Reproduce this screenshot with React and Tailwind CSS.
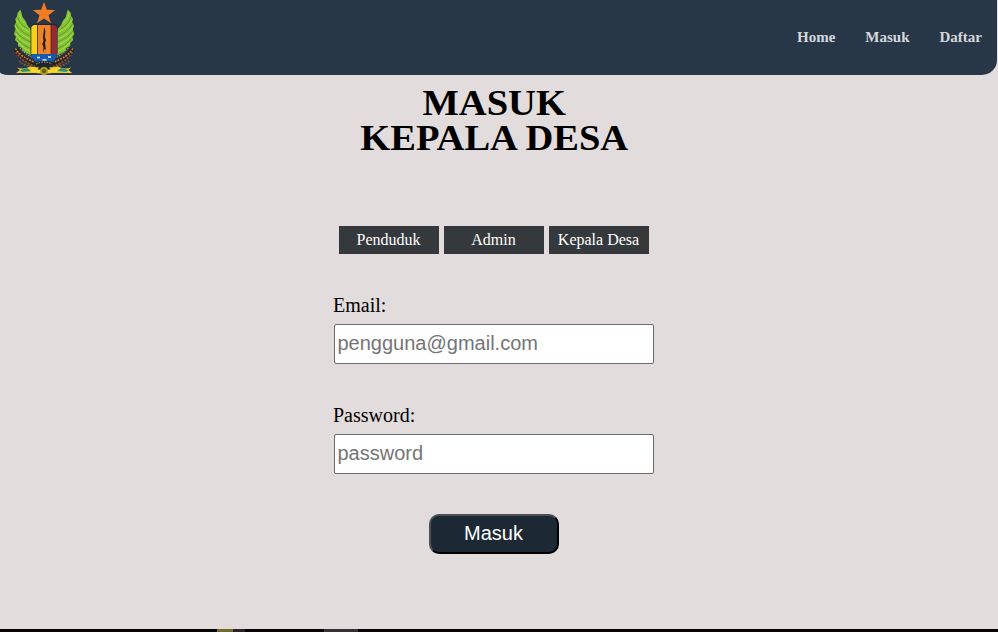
function Wing() {
  return (
    <g>
      <path d="M20.5 9.5L17.5 13L17.2 16L15.2 19L16.2 22L14.2 26L15.6 29L14 34L16 37L15 40L18 43L18 46L22 48L23 51L32 56V33L30.5 29L27.5 25.5L25.5 21L22.5 17L21.5 13Z" fill="#85c336" />
      <path d="M17.5 17Q19 24 28 29M16 24Q19 31 30 36M15.5 31Q20 38 31 42M17 39Q22 45 31 49" fill="none" stroke="#4d8a2b" strokeWidth="0.7" />
      <path d="M19.5 13Q19 19 25 23M17 20Q19 27 29 32M15.5 27Q19 34 30 39M16 34Q21 42 31 45M19 43Q24 49 31 52" fill="none" stroke="#b0dc48" strokeWidth="0.9" />
      <path d="M15.5 49Q20 58 38 65" fill="none" stroke="#2b211c" strokeWidth="5" />
      <path d="M15.5 48.5Q20 57 37 63" fill="none" stroke="#bf8649" strokeWidth="1.6" strokeDasharray="2 1" />
      <path d="M16 52Q21 61 36 67" fill="none" stroke="#9d4b2d" strokeWidth="1.8" strokeDasharray="2 1.3" />
      <path d="M20 48Q26 55 34 58" fill="none" stroke="#b99a5b" strokeWidth="1.2" strokeDasharray="1.5 1.2" />
      <path d="M19 61Q24 66 31 66" fill="none" stroke="#865633" strokeWidth="1.5" strokeDasharray="2 1" />
    </g>
  );
}

function Emblem() {
  return (
    <svg viewBox="0 0 88 75" className="h-[75px] w-[88px] shrink-0" aria-hidden="true">
      <Wing />
      <g transform="translate(88.3 0) scale(-1 1)"><Wing /></g>
      <path d="M44 2L46.8 9.8L55.2 10.1L48.5 15.2L51 23.2L44 18.5L37 23.2L39.5 15.2L32.8 10.1L41.2 9.8Z" fill="#f07d24" />
      <path d="M33 24H55L57.6 26.5V52Q57.6 59 52 62L44 66L36 62Q30.6 59 30.6 52V26.5Z" fill="#1d2330" />
      <path d="M33.5 25H37.5V54H31.3V27Z" fill="#f9cf17" />
      <path d="M37.5 25H51V54H37.5Z" fill="#ee8329" />
      <path d="M51 25H54.7L57 27V54H51Z" fill="#982832" />
      <path d="M37.5 25V54M51 25V54" stroke="#322326" strokeWidth="0.7" />
      <path d="M44.3 27L45.4 31L44.8 37L46 40L45 43L46 50L44.4 49L43.2 53L43.4 47L42.2 44L43.5 41L42.9 37L43.5 33Z" fill="#24201e" />
      <path d="M31.2 54H57.1Q56 60 52 62H36.5Q32 60 31.2 54Z" fill="#155aac" />
      <path d="M37 57.5h3M42.5 60h4M48 57h3" stroke="#e7f4fb" strokeWidth="1.5" />
      <path d="M33 62.5Q44 59 55 62.5L51 69H37Z" fill="#20282d" />
      <path d="M36 64Q44 60 52 64" fill="none" stroke="#c0b49b" strokeWidth="0.9" strokeDasharray="1.5 1.2" />
      <path d="M16 73L20 70L17 67.5Q24 70 30 66.5L39 67.5L35 73Z" fill="#edcc25" />
      <path d="M72.3 73L68.3 70L71.3 67.5Q64 70 58 66.5L49 67.5L53 73Z" fill="#edcc25" />
      <path d="M20 70l7-2 4 3-9 1ZM68.3 70l-7-2-4 3 9 1Z" fill="#28917b" />
      <path d="M31 68Q44 72 57 68V72Q44 75 31 72Z" fill="#f6d92c" />
      <circle cx="44" cy="71" r="4" fill="#b6a51c" />
      <circle cx="44" cy="71" r="2.3" fill="#665d20" />
    </svg>
  );
}

function Field({ label, type, placeholder }) {
  return (
    <label className="block h-[110px] text-[20px] leading-[24px]">
      <span className="-ml-px block h-[31px]">{label}</span>
      <input
        type={type}
        placeholder={placeholder}
        className="block h-[40px] w-[320px] rounded-[2px] border border-[#6c6c6c] bg-white px-[2.5px] pb-[1px] font-['Liberation_Sans',Arial,sans-serif] text-[20px] placeholder:text-[#757575]"
      />
    </label>
  );
}

export default function App() {
  return (
    <div className="flex h-[632px] w-[998px] flex-col overflow-hidden bg-[#e2dcdc] font-['Liberation_Serif','Times_New_Roman',serif] text-black">
      <header className="flex h-[75px] w-[997px] shrink-0 items-center justify-between rounded-br-[15px] rounded-bl-[8px_3px] bg-[#283747] pr-[15px]">
        <Emblem />
        <nav className="flex gap-[30px] pb-[2px] text-[15px] leading-[18px] font-bold text-[#d5d8dc]">
          <a>Home</a>
          <a>Masuk</a>
          <a>Daftar</a>
        </nav>
      </header>
      <main className="flex w-[988px] flex-1 flex-col items-center pt-[11px]">
        <h1 className="scale-x-[1.07] text-center text-[36px] leading-[35px] font-bold">
          MASUK<br />KEPALA DESA
        </h1>
        <div className="mt-[70px] flex gap-[5px]">
          {['Penduduk', 'Admin', 'Kepala Desa'].map((role) => (
            <button key={role} className="h-[28px] w-[100px] bg-[#36393b] pr-[1px] text-[16px] leading-[28px] text-white">
              {role}
            </button>
          ))}
        </div>
        <form className="mt-[39px] flex w-[320px] flex-col">
          <Field label="Email:" type="email" placeholder="pengguna@gmail.com" />
          <Field label="Password:" type="password" placeholder="password" />
          <button type="button" className="mt-[1px] h-[40px] w-[130px] self-center rounded-[10px] border-2 border-t-[#4b4f52] border-r-black border-b-black border-l-[#4b4f52] bg-[#1c2833] pr-[1px] pb-[2px] font-['Liberation_Sans',Arial,sans-serif] text-[20px] leading-none text-white">
            Masuk
          </button>
        </form>
      </main>
      <footer className="flex h-[3px] shrink-0 bg-[#080509]">
        <div className="ml-[217px] w-[16px] bg-[#726b29]" />
        <div className="w-[12px] bg-[#282429]" />
        <div className="ml-[79px] w-[34px] bg-[#343236]" />
      </footer>
    </div>
  );
}
